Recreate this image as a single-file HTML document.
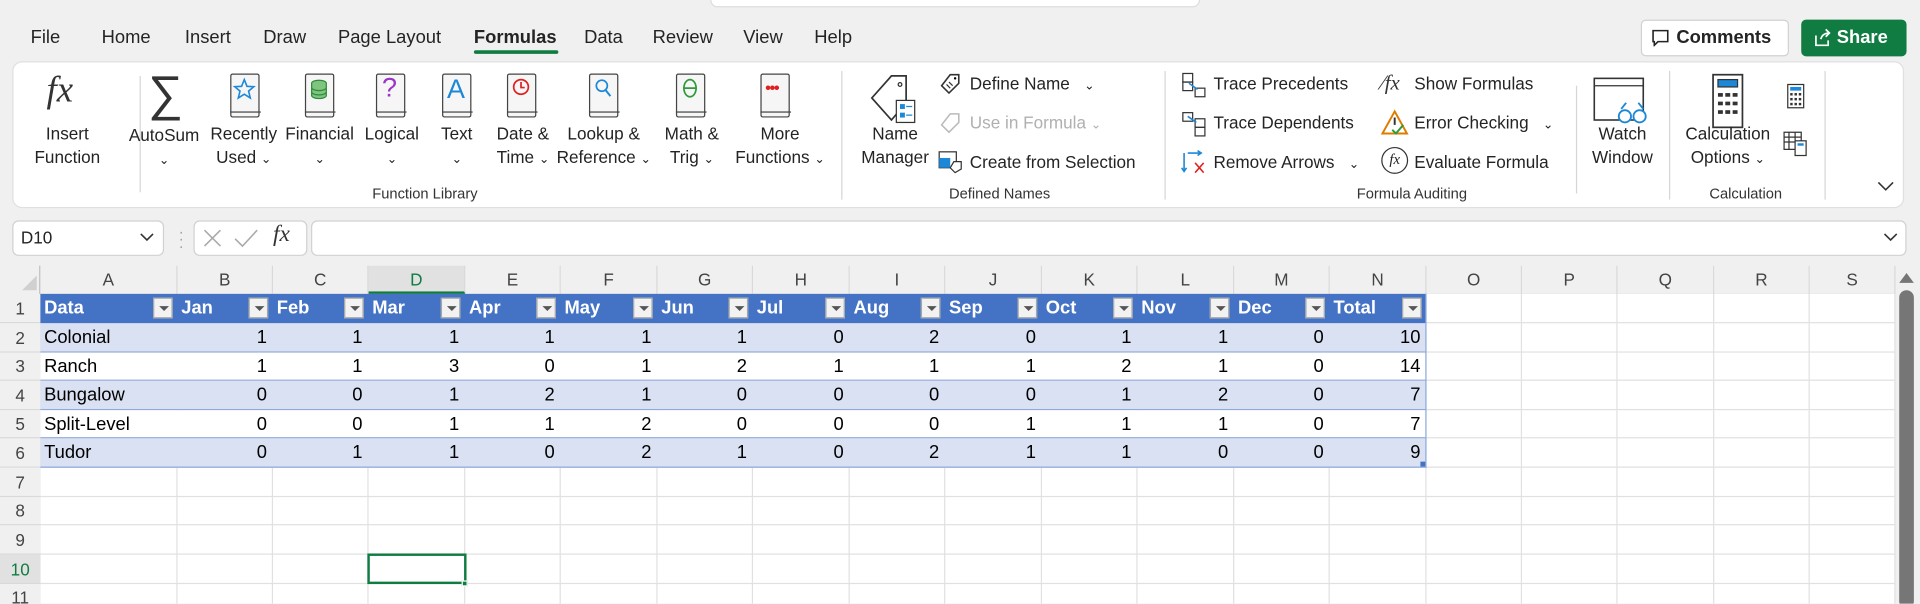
<!DOCTYPE html>
<html><head><meta charset="utf-8">
<style>
*{box-sizing:border-box;margin:0;padding:0}
html,body{width:1920px;height:603px;overflow:hidden;background:#f0f0f0}
#root{position:absolute;left:0;top:0;width:1568px;height:493px;transform:scale(1.22449);transform-origin:0 0;font-family:"Liberation Sans",sans-serif;color:#242424;background:#f0f0f0;overflow:hidden}
.a{position:absolute;white-space:nowrap}
.tab{position:absolute;top:22px;font-size:15px;color:#242424}
.lbl{position:absolute;font-size:14px;text-align:center;line-height:19px;color:#242424}
.glbl{position:absolute;top:151px;font-size:12px;color:#333}
.sep{position:absolute;top:58px;width:1px;height:105px;background:#d6d6d6}
.sm{position:absolute;font-size:14px;color:#242424}
.chev{font-size:10px}
.book{position:absolute;width:24px;height:36px;border:1.5px solid #444;border-radius:2px;background:#f6f6f6}
.book:after{content:"";position:absolute;left:-1.5px;right:-1.5px;bottom:3px;height:1.5px;background:#444}
#grid{position:absolute;left:0;top:217px;width:1548px;height:276px;background:#fff}
.ch{position:absolute;top:0;height:23px;font-size:14px;text-align:center;line-height:23px;color:#444;background:#f0f0f0;border-right:1px solid #d9d9d9}
.rh{position:absolute;left:0;width:33px;font-size:14px;text-align:center;color:#444;background:#f0f0f0;border-bottom:1px solid #d9d9d9}
.vl{position:absolute;top:23px;width:1px;height:260px;background:#e1e1e1}
.hl{position:absolute;left:33px;height:1px;width:1515px;background:#e1e1e1}
.c{position:absolute;font-size:15px;line-height:23px;color:#000}
.h{color:#fff;font-weight:bold}
.fb{position:absolute;width:16px;height:17px;background:#f2f2f2;border:1px solid #a6a6a6}
.fb:after{content:"";position:absolute;left:4px;top:6px;border-left:4px solid transparent;border-right:4px solid transparent;border-top:4px solid #555}
</style></head><body><div id="root">

<!-- top bar -->
<div class="a" style="left:580px;top:-10px;width:400px;height:16px;background:#fff;border:1px solid #ddd;border-radius:6px"></div>
<div class="tab" style="left:25px">File</div>
<div class="tab" style="left:83px">Home</div>
<div class="tab" style="left:151px">Insert</div>
<div class="tab" style="left:215px">Draw</div>
<div class="tab" style="left:276px">Page Layout</div>
<div class="tab" style="left:387px;font-weight:bold">Formulas</div>
<div class="a" style="left:387px;top:41px;width:69px;height:3px;background:#107c41;border-radius:2px"></div>
<div class="tab" style="left:477px">Data</div>
<div class="tab" style="left:533px">Review</div>
<div class="tab" style="left:607px">View</div>
<div class="tab" style="left:665px">Help</div>

<div class="a" style="left:1340px;top:16px;width:121px;height:30px;background:#fff;border:1px solid #d1d1d1;border-radius:4px;font-size:15px;font-weight:bold;line-height:28px;padding-left:28px">Comments</div>
<svg class="a" style="left:1349px;top:24px" width="14" height="14"><path d="M1 1h12v9H5l-3 3v-3H1z" fill="none" stroke="#242424" stroke-width="1.3"/></svg>
<div class="a" style="left:1471px;top:16px;width:86px;height:30px;background:#107c41;border-radius:4px;color:#fff;font-size:15px;font-weight:bold;line-height:30px;padding-left:29px">Share</div>
<svg class="a" style="left:1481px;top:23px" width="15" height="15"><path d="M2 6v8h10v-4M6 9c1-4 4-5 7-5M10 1l3 3-3 3" fill="none" stroke="#fff" stroke-width="1.4"/></svg>

<!-- ribbon -->
<div class="a" style="left:10px;top:50px;width:1545px;height:120px;background:#fff;border:1px solid #e0e0e0;border-radius:8px"></div>

<div class="a" style="left:38px;top:57px;font-family:'Liberation Serif',serif;font-style:italic;font-size:30px;color:#333">fx</div>
<div class="lbl" style="left:20px;top:100px;width:70px">Insert<br>Function</div>
<div class="sep" style="left:114px;top:62px;height:95px"></div>

<div class="a" style="left:121px;top:54px;font-size:40px;color:#333;font-family:'DejaVu Sans',sans-serif;font-weight:200">∑</div>
<div class="lbl" style="left:99px;top:101px;width:70px">AutoSum<br><span class="chev">⌄</span></div>

<div class="book" style="left:188px;top:60px"><svg width="21" height="24" style="position:absolute;left:0;top:1px"><path d="M10.5 3l2.2 5.5 5.6.3-4.3 3.6 1.4 5.6-4.9-3.1-4.9 3.1 1.4-5.6-4.3-3.6 5.6-.3z" fill="none" stroke="#1e88d8" stroke-width="1.3"/></svg></div>
<div class="lbl" style="left:168px;top:100px;width:62px">Recently<br>Used <span class="chev">⌄</span></div>

<div class="book" style="left:249px;top:60px"><svg width="21" height="24" style="position:absolute;left:0;top:1px"><ellipse cx="10.5" cy="6" rx="6" ry="2.5" fill="#7fc47f" stroke="#2e8b3a"/><path d="M4.5 6v10c0 1.4 2.7 2.5 6 2.5s6-1.1 6-2.5V6M4.5 9.5c0 1.4 2.7 2.5 6 2.5s6-1.1 6-2.5M4.5 13c0 1.4 2.7 2.5 6 2.5s6-1.1 6-2.5" fill="#7fc47f" stroke="#2e8b3a"/></svg></div>
<div class="lbl" style="left:230px;top:100px;width:62px">Financial<br><span class="chev">⌄</span></div>

<div class="book" style="left:307px;top:60px"><div class="a" style="left:4px;top:-2px;font-size:22px;color:#9b35c6">?</div></div>
<div class="lbl" style="left:290px;top:100px;width:60px">Logical<br><span class="chev">⌄</span></div>

<div class="book" style="left:361px;top:60px"><div class="a" style="left:3px;top:-1px;font-size:22px;color:#1e88d8">A</div></div>
<div class="lbl" style="left:353px;top:100px;width:40px">Text<br><span class="chev">⌄</span></div>

<div class="book" style="left:414px;top:60px"><svg width="21" height="24" style="position:absolute;left:0;top:1px"><circle cx="10.5" cy="9" r="6" fill="none" stroke="#e02020" stroke-width="1.4"/><path d="M10.5 5v4.5h3" fill="none" stroke="#e02020" stroke-width="1.4"/></svg></div>
<div class="lbl" style="left:397px;top:100px;width:60px">Date &amp;<br>Time <span class="chev">⌄</span></div>

<div class="book" style="left:481px;top:60px"><svg width="21" height="24" style="position:absolute;left:0;top:1px"><circle cx="9.5" cy="8" r="4.5" fill="none" stroke="#1e88d8" stroke-width="1.4"/><path d="M12.5 11.5l4 5" stroke="#1e88d8" stroke-width="1.6"/></svg></div>
<div class="lbl" style="left:453px;top:100px;width:80px">Lookup &amp;<br>Reference <span class="chev">⌄</span></div>

<div class="book" style="left:552px;top:60px"><svg width="21" height="24" style="position:absolute;left:0;top:1px"><ellipse cx="10.5" cy="10" rx="5" ry="7" fill="none" stroke="#2e9b3a" stroke-width="1.4"/><path d="M5.5 10h10" stroke="#2e9b3a" stroke-width="1.4"/></svg></div>
<div class="lbl" style="left:532px;top:100px;width:66px">Math &amp;<br>Trig <span class="chev">⌄</span></div>

<div class="book" style="left:621px;top:60px"><div class="a" style="left:3px;top:3px;font-size:13px;color:#e02020;letter-spacing:-1px;font-weight:bold">•••</div></div>
<div class="lbl" style="left:597px;top:100px;width:80px">More<br>Functions <span class="chev">⌄</span></div>
<div class="glbl" style="left:304px">Function Library</div>
<div class="sep" style="left:687px"></div>

<svg class="a" style="left:708px;top:60px" width="44" height="44"><path d="M20 2h12v22L20 38 4 20z" fill="#fff" stroke="#333" stroke-width="1.4"/><circle cx="27" cy="9" r="1.5" fill="none" stroke="#333"/><rect x="24" y="22" width="15" height="18" fill="#fff" stroke="#333"/><rect x="27" y="25" width="4" height="4" fill="#1e88d8"/><rect x="27" y="32" width="4" height="4" fill="#1e88d8"/><path d="M32 27h5M32 34h5" stroke="#1e88d8"/></svg>
<div class="lbl" style="left:699px;top:100px;width:64px">Name<br>Manager</div>
<svg class="a" style="left:766px;top:59px" width="20" height="20"><path d="M10 2h7v7L9 17 3 11z" fill="none" stroke="#333" stroke-width="1.3"/><circle cx="14" cy="5" r="1"/><path d="M7 10l3 3M9 8l3 3" stroke="#333"/></svg>
<div class="sm" style="left:792px;top:60px">Define Name &nbsp;&nbsp;<span class="chev">⌄</span></div>
<svg class="a" style="left:766px;top:91px" width="22" height="20"><path d="M10 2h7v7L9 17 3 11z" fill="none" stroke="#bbb" stroke-width="1.3"/></svg>
<div class="sm" style="left:792px;top:92px;color:#b0b0b0">Use in Formula <span class="chev">⌄</span></div>
<svg class="a" style="left:766px;top:122px" width="22" height="20"><rect x="1" y="2" width="14" height="13" fill="#fff" stroke="#333"/><rect x="1" y="7" width="9" height="8" fill="#1e88d8"/><path d="M13 10h6v6l-5 3-4-4z" fill="#fff" stroke="#333"/></svg>
<div class="sm" style="left:792px;top:124px">Create from Selection</div>
<div class="glbl" style="left:775px">Defined Names</div>
<div class="sep" style="left:951px"></div>

<svg class="a" style="left:964px;top:58px" width="22" height="22"><rect x="2" y="2" width="8" height="7" fill="none" stroke="#333"/><rect x="2" y="9" width="8" height="7" fill="none" stroke="#333"/><rect x="12" y="14" width="8" height="7" fill="none" stroke="#333"/><path d="M7 10l7 5" stroke="#1e88d8" stroke-width="1.3"/></svg>
<div class="sm" style="left:991px;top:60px">Trace Precedents</div>
<svg class="a" style="left:964px;top:90px" width="22" height="22"><rect x="2" y="2" width="8" height="7" fill="none" stroke="#333"/><rect x="12" y="7" width="8" height="7" fill="none" stroke="#333"/><rect x="12" y="14" width="8" height="7" fill="none" stroke="#333"/><path d="M6 5l7 5" stroke="#1e88d8" stroke-width="1.3"/></svg>
<div class="sm" style="left:991px;top:92px">Trace Dependents</div>
<svg class="a" style="left:964px;top:121px" width="24" height="24"><path d="M3 4v14M1 16l2 3 2-3M6 4h10M14 2l3 2-3 2" fill="none" stroke="#1e88d8" stroke-width="1.3"/><path d="M12 12l7 8M19 12l-7 8" stroke="#e02020" stroke-width="1.3"/></svg>
<div class="sm" style="left:991px;top:124px">Remove Arrows &nbsp;&nbsp;<span class="chev">⌄</span></div>
<div class="a" style="left:1128px;top:58px;font-family:'Liberation Serif',serif;font-style:italic;font-size:17px;color:#333">⁄fx</div>
<div class="sm" style="left:1155px;top:60px">Show Formulas</div>
<svg class="a" style="left:1127px;top:89px" width="24" height="22"><path d="M12 2L2 20h20z" fill="none" stroke="#e07b00" stroke-width="1.6"/><path d="M12 7v6" stroke="#333" stroke-width="1.6"/><path d="M10 17l3 3 6-7" fill="none" stroke="#2e9b3a" stroke-width="1.6"/></svg>
<div class="sm" style="left:1155px;top:92px">Error Checking &nbsp;&nbsp;<span class="chev">⌄</span></div>
<div class="a" style="left:1128px;top:120px;width:22px;height:22px;border:1.3px solid #333;border-radius:50%;font-family:'Liberation Serif',serif;font-style:italic;font-size:12px;line-height:19px;text-align:center">fx</div>
<div class="sm" style="left:1155px;top:124px">Evaluate Formula</div>
<div class="sep" style="left:1287px;top:70px;height:88px"></div>
<svg class="a" style="left:1300px;top:62px" width="46" height="42"><rect x="2" y="2" width="40" height="34" fill="#fff" stroke="#333" stroke-width="1.3"/><path d="M2 8h40" stroke="#333"/><circle cx="27" cy="33" r="5" fill="#fff" stroke="#1e88d8" stroke-width="1.5"/><circle cx="39" cy="33" r="5" fill="#fff" stroke="#1e88d8" stroke-width="1.5"/><path d="M24 27l4-5M42 27l-4-5" stroke="#1e88d8" stroke-width="1.5"/></svg>
<div class="lbl" style="left:1295px;top:100px;width:60px">Watch<br>Window</div>
<div class="glbl" style="left:1108px">Formula Auditing</div>
<div class="sep" style="left:1363px"></div>

<svg class="a" style="left:1397px;top:59px" width="28" height="48"><rect x="2" y="2" width="24" height="43" fill="#fff" stroke="#333" stroke-width="1.4"/><rect x="6" y="6" width="16" height="6" fill="#1e88d8" stroke="#333"/><g fill="#333"><rect x="6" y="17" width="4" height="3"/><rect x="12" y="17" width="4" height="3"/><rect x="18" y="17" width="4" height="3"/><rect x="6" y="24" width="4" height="3"/><rect x="12" y="24" width="4" height="3"/><rect x="18" y="24" width="4" height="3"/><rect x="6" y="31" width="4" height="3"/><rect x="12" y="31" width="4" height="3"/><rect x="18" y="31" width="4" height="3"/></g></svg>
<div class="lbl" style="left:1371px;top:100px;width:80px">Calculation<br>Options <span class="chev">⌄</span></div>
<svg class="a" style="left:1459px;top:68px" width="16" height="22"><rect x="1" y="1" width="13" height="19" fill="#fff" stroke="#333"/><rect x="3" y="3" width="9" height="3" fill="#1e88d8"/><g fill="#333"><rect x="3" y="8" width="2" height="2"/><rect x="6.5" y="8" width="2" height="2"/><rect x="10" y="8" width="2" height="2"/><rect x="3" y="12" width="2" height="2"/><rect x="6.5" y="12" width="2" height="2"/><rect x="10" y="12" width="2" height="2"/><rect x="3" y="16" width="2" height="2"/><rect x="6.5" y="16" width="2" height="2"/><rect x="10" y="16" width="2" height="2"/></g></svg>
<svg class="a" style="left:1456px;top:106px" width="22" height="22"><path d="M1 2h14v14H1zM1 6h14M1 10h14M5 2v14M10 2v14" fill="none" stroke="#333"/><rect x="10" y="9" width="9" height="12" fill="#fff" stroke="#333"/><rect x="12" y="11" width="5" height="2" fill="#1e88d8"/></svg>
<div class="glbl" style="left:1396px">Calculation</div>
<div class="sep" style="left:1490px"></div>
<svg class="a" style="left:1533px;top:147px" width="14" height="10"><path d="M1 2l6 6 6-6" fill="none" stroke="#333" stroke-width="1.3"/></svg>

<!-- formula bar -->
<div class="a" style="left:10px;top:180px;width:124px;height:29px;background:#fff;border:1px solid #d1d1d1;border-radius:5px;font-size:14px;line-height:27px;padding-left:6px">D10</div>
<svg class="a" style="left:114px;top:190px" width="12" height="8"><path d="M1 1l5 5 5-5" fill="none" stroke="#333" stroke-width="1.3"/></svg>
<div class="a" style="left:146px;top:186px;color:#999;font-size:12px;line-height:6px">·<br>·<br>·</div>
<div class="a" style="left:158px;top:180px;width:93px;height:29px;background:#fff;border:1px solid #d1d1d1;border-radius:5px"></div>
<svg class="a" style="left:164px;top:186px" width="60" height="18"><path d="M3 2l13 13M16 2L3 15M28 9l6 6 12-13" fill="none" stroke="#aaa" stroke-width="1.3"/></svg>
<div class="a" style="left:223px;top:181px;font-family:'Liberation Serif',serif;font-style:italic;font-size:19px;color:#333">fx</div>
<div class="a" style="left:254px;top:180px;width:1303px;height:29px;background:#fff;border:1px solid #d1d1d1;border-radius:5px"></div>
<svg class="a" style="left:1538px;top:190px" width="12" height="8"><path d="M1 1l5 5 5-5" fill="none" stroke="#333" stroke-width="1.3"/></svg>

<!-- grid -->
<div id="grid">
<div class="a" style="left:0;top:0;width:1548px;height:23px;background:#f0f0f0;border-bottom:1px solid #bdbdbd"></div>
<div class="a" style="left:0;top:0;width:33px;height:276px;background:#f0f0f0;border-right:1px solid #bdbdbd"></div>
<svg class="a" style="left:18px;top:8px" width="13" height="13"><path d="M12 0v12H0z" fill="#d0d0d0"/></svg>
<div id="gl"></div>
</div>
<!-- scrollbar -->
<div class="a" style="left:1548px;top:217px;width:20px;height:276px;background:#f0f0f0"></div>
<svg class="a" style="left:1550px;top:222px" width="14" height="10"><path d="M7 1l6 8H1z" fill="#767676"/></svg>
<div class="a" style="left:1551px;top:237px;width:12px;height:260px;background:#767676;border-radius:6px"></div>

<script>
var xs=[33,145,223,301,380,458,537,615,694,772,851,929,1008,1086,1165,1243,1321,1400,1478,1548];
var L="ABCDEFGHIJKLMNOPQRS";
var rows=[240,264,288,311,335,358,382,406,429,453,477,500];
var h='';
for(var i=0;i<19;i++){var s=i==3?'background:#e1e1e1;color:#107c41;border-bottom:2px solid #107c41;':'';h+='<div class="ch" style="left:'+xs[i]+'px;width:'+(xs[i+1]-xs[i])+'px;'+s+'">'+L[i]+'</div>';h+='<div class="vl" style="left:'+(xs[i+1]-1)+'px"></div>';}
for(var r=0;r<11;r++){var y=rows[r]-217;var s=r==9?'background:#e1e1e1;color:#107c41;':'';h+='<div class="rh" style="top:'+y+'px;height:'+(rows[r+1]-rows[r])+'px;line-height:'+(rows[r+1]-rows[r])+'px;'+s+'">'+(r+1)+'</div>';h+='<div class="hl" style="top:'+(rows[r+1]-218)+'px"></div>';}
var hd=["Data","Jan","Feb","Mar","Apr","May","Jun","Jul","Aug","Sep","Oct","Nov","Dec","Total"];
var d=[["Colonial",1,1,1,1,1,1,0,2,0,1,1,0,10],["Ranch",1,1,3,0,1,2,1,1,1,2,1,0,14],["Bungalow",0,0,1,2,1,0,0,0,0,1,2,0,7],["Split-Level",0,0,1,1,2,0,0,0,1,1,1,0,7],["Tudor",0,1,1,0,2,1,0,2,1,1,0,0,9]];
h+='<div class="a" style="left:33px;top:23px;width:1132px;height:24px;background:#4472c4"></div>';
for(var r=0;r<5;r++){var y=rows[r+1]-217;var bg=r%2==0?'#d9e1f2':'#fff';h+='<div class="a" style="left:33px;top:'+y+'px;width:1132px;height:'+(rows[r+2]-rows[r+1])+'px;background:'+bg+';border-bottom:1px solid #8ea9db"></div>';}
h+='<div class="a" style="left:1164px;top:23px;width:1px;height:142px;background:#8ea9db"></div>';
for(var i=0;i<14;i++){h+='<div class="c h" style="left:'+(xs[i]+3)+'px;top:23px">'+hd[i]+'</div>';h+='<div class="fb" style="left:'+(xs[i+1]-20)+'px;top:26px"></div>';
for(var r=0;r<5;r++){var y=rows[r+1]-217;if(i==0)h+='<div class="c" style="left:'+(xs[0]+3)+'px;top:'+y+'px">'+d[r][0]+'</div>';else h+='<div class="c" style="left:'+xs[i]+'px;width:'+(xs[i+1]-xs[i]-5)+'px;text-align:right;top:'+y+'px">'+d[r][i]+'</div>';}}
h+='<div class="a" style="left:1160px;top:160px;width:4px;height:4px;background:#4472c4"></div>';
h+='<div class="a" style="left:300px;top:235px;width:81px;height:25px;border:2px solid #107c41"></div><div class="a" style="left:377px;top:257px;width:5px;height:5px;background:#107c41;border:1px solid #fff"></div>';
document.getElementById('gl').innerHTML=h;
</script>
</div></body></html>
